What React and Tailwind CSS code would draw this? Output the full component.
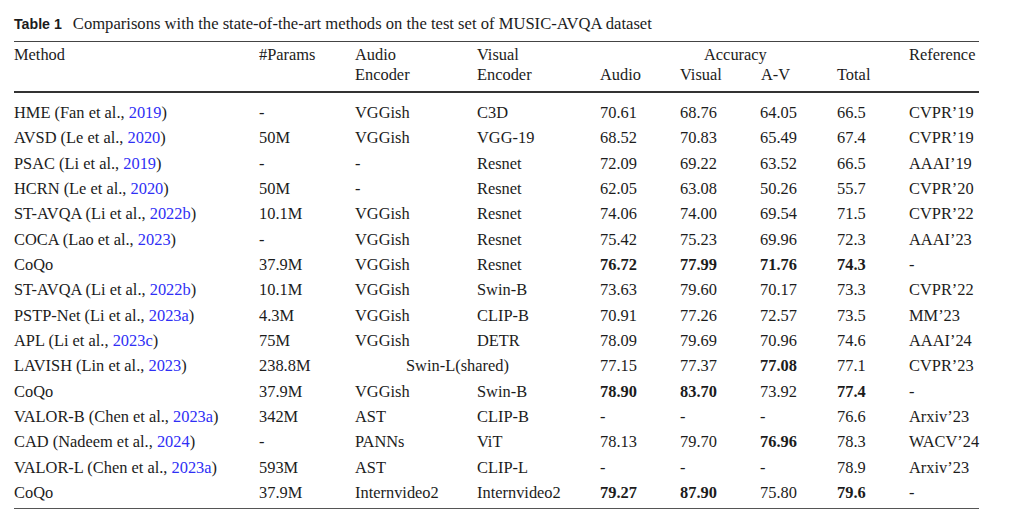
const rows = [
  { m: 'HME (Fan et al., ', y: '2019', p: '-', ae: 'VGGish', ve: 'C3D', a: '70.61', v: '68.76', av: '64.05', t: '66.5', r: 'CVPR’19' },
  { m: 'AVSD (Le et al., ', y: '2020', p: '50M', ae: 'VGGish', ve: 'VGG-19', a: '68.52', v: '70.83', av: '65.49', t: '67.4', r: 'CVPR’19' },
  { m: 'PSAC (Li et al., ', y: '2019', p: '-', ae: '-', ve: 'Resnet', a: '72.09', v: '69.22', av: '63.52', t: '66.5', r: 'AAAI’19' },
  { m: 'HCRN (Le et al., ', y: '2020', p: '50M', ae: '-', ve: 'Resnet', a: '62.05', v: '63.08', av: '50.26', t: '55.7', r: 'CVPR’20' },
  { m: 'ST-AVQA (Li et al., ', y: '2022b', p: '10.1M', ae: 'VGGish', ve: 'Resnet', a: '74.06', v: '74.00', av: '69.54', t: '71.5', r: 'CVPR’22' },
  { m: 'COCA (Lao et al., ', y: '2023', p: '-', ae: 'VGGish', ve: 'Resnet', a: '75.42', v: '75.23', av: '69.96', t: '72.3', r: 'AAAI’23' },
  { m: 'CoQo', p: '37.9M', ae: 'VGGish', ve: 'Resnet', a: '76.72', v: '77.99', av: '71.76', t: '74.3', r: '-', bold: ['a', 'v', 'av', 't'] },
  { m: 'ST-AVQA (Li et al., ', y: '2022b', p: '10.1M', ae: 'VGGish', ve: 'Swin-B', a: '73.63', v: '79.60', av: '70.17', t: '73.3', r: 'CVPR’22' },
  { m: 'PSTP-Net (Li et al., ', y: '2023a', p: '4.3M', ae: 'VGGish', ve: 'CLIP-B', a: '70.91', v: '77.26', av: '72.57', t: '73.5', r: 'MM’23' },
  { m: 'APL (Li et al., ', y: '2023c', p: '75M', ae: 'VGGish', ve: 'DETR', a: '78.09', v: '79.69', av: '70.96', t: '74.6', r: 'AAAI’24' },
  { m: 'LAVISH (Lin et al., ', y: '2023', p: '238.8M', shared: 'Swin-L(shared)', a: '77.15', v: '77.37', av: '77.08', t: '77.1', r: 'CVPR’23', bold: ['av'] },
  { m: 'CoQo', p: '37.9M', ae: 'VGGish', ve: 'Swin-B', a: '78.90', v: '83.70', av: '73.92', t: '77.4', r: '-', bold: ['a', 'v', 't'] },
  { m: 'VALOR-B (Chen et al., ', y: '2023a', p: '342M', ae: 'AST', ve: 'CLIP-B', a: '-', v: '-', av: '-', t: '76.6', r: 'Arxiv’23' },
  { m: 'CAD (Nadeem et al., ', y: '2024', p: '-', ae: 'PANNs', ve: 'ViT', a: '78.13', v: '79.70', av: '76.96', t: '78.3', r: 'WACV’24', bold: ['av'] },
  { m: 'VALOR-L (Chen et al., ', y: '2023a', p: '593M', ae: 'AST', ve: 'CLIP-L', a: '-', v: '-', av: '-', t: '78.9', r: 'Arxiv’23' },
  { m: 'CoQo', p: '37.9M', ae: 'Internvideo2', ve: 'Internvideo2', a: '79.27', v: '87.90', av: '75.80', t: '79.6', r: '-', bold: ['a', 'v', 't'] },
];

const grid = 'grid grid-cols-[245px_96px_122px_123px_80px_80px_77px_72px_1fr]';

function Cell({ row, k }) {
  const b = row.bold && row.bold.includes(k);
  return <div className={b ? 'font-bold' : ''}>{row[k]}</div>;
}

export default function App() {
  return (
    <div className="w-[1024px] h-[530px] bg-white text-[#1c1c1c] pl-[14px] pt-[14px]" style={{ fontFamily: '"Liberation Serif", serif' }}>
      <div className="w-[965px]">
        <div className="h-[20px] leading-[20px] whitespace-nowrap">
          <span className="font-bold text-[14.2px]" style={{ fontFamily: '"Liberation Sans", sans-serif' }}>Table 1</span>
          <span className="text-[16.6px] ml-[11px]">Comparisons with the state-of-the-art methods on the test set of MUSIC-AVQA dataset</span>
        </div>
        <div className="mt-[7px] border-t border-[#444]" />
        <div className="text-[16.4px] leading-[20px] pt-[3px] pb-[6px] border-b-2 border-[#333]">
          <div className={grid}>
            <div>Method</div>
            <div>#Params</div>
            <div>Audio</div>
            <div>Visual</div>
            <div className="col-span-4 pl-[104px]">Accuracy</div>
            <div>Reference</div>
          </div>
          <div className={grid}>
            <div />
            <div />
            <div>Encoder</div>
            <div>Encoder</div>
            <div>Audio</div>
            <div>Visual</div>
            <div className="pl-px">A-V</div>
            <div>Total</div>
            <div />
          </div>
        </div>
        <div className="text-[16.4px] pt-[7px] pb-[3px] border-b border-[#555]">
          {rows.map((row, i) => (
            <div key={i} className={grid + ' h-[25.33px] leading-[25.33px] whitespace-nowrap'}>
              <div>
                {row.m}
                {row.y && (
                  <>
                    <span className="text-[#2f2ff5]">{row.y}</span>)
                  </>
                )}
              </div>
              <div>{row.p}</div>
              {row.shared ? (
                <div className="col-span-2 pl-[51px]">{row.shared}</div>
              ) : (
                <>
                  <div>{row.ae}</div>
                  <div>{row.ve}</div>
                </>
              )}
              <Cell row={row} k="a" />
              <Cell row={row} k="v" />
              <Cell row={row} k="av" />
              <Cell row={row} k="t" />
              <div>{row.r}</div>
            </div>
          ))}
        </div>
      </div>
    </div>
  );
}
